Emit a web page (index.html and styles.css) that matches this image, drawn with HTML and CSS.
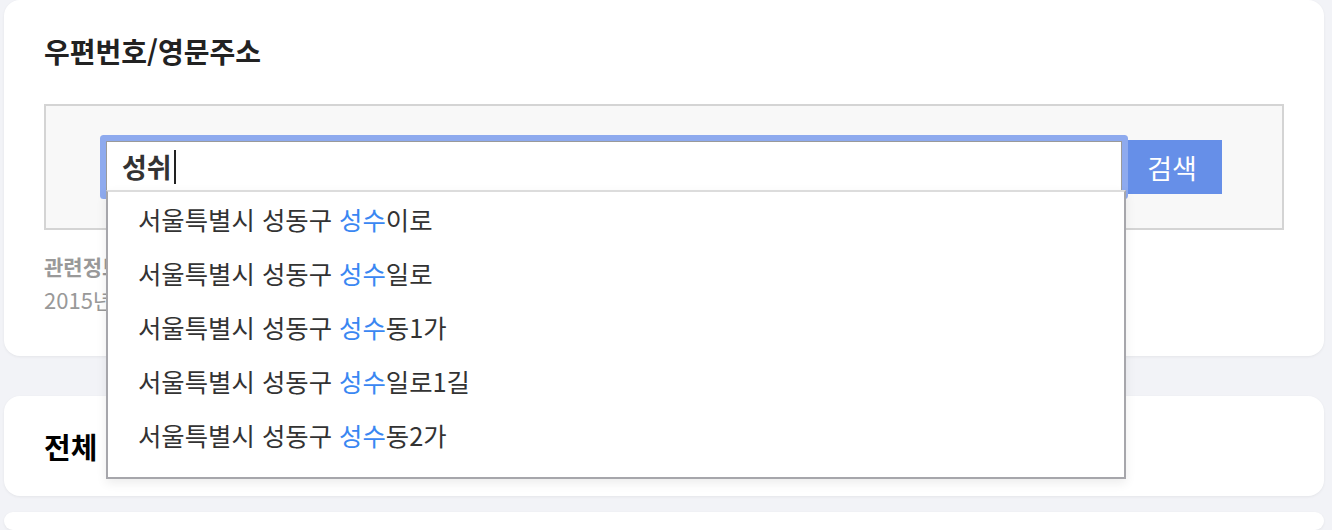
FILE: index.html
```html
<!DOCTYPE html>
<html lang="ko">
<head>
<meta charset="utf-8">
<title>우편번호/영문주소</title>
<link rel="stylesheet" href="styles.css">
</head>
<body>
<div class="page">
  <section class="card card-search">
    <h2 class="card-title">우편번호/영문주소</h2>
    <div class="search-box">
      <div class="search-row">
        <div class="input-wrap">
          <div class="input">성쉬<span class="caret"></span></div>
          <ul class="suggest">
            <li>서울특별시 성동구 <em>성수</em>이로</li>
            <li>서울특별시 성동구 <em>성수</em>일로</li>
            <li>서울특별시 성동구 <em>성수</em>동1가</li>
            <li>서울특별시 성동구 <em>성수</em>일로1길</li>
            <li>서울특별시 성동구 <em>성수</em>동2가</li>
          </ul>
        </div>
        <button class="btn-search">검색</button>
      </div>
    </div>
    <p class="info-title">관련정보</p>
    <p class="info-text">2015년 8월 1일부터 새 우편번호가 시행됩니다.</p>
  </section>
  <section class="card card-all">
    <h3 class="all-title">전체</h3>
  </section>
  <section class="card card-next"></section>
</div>
</body>
</html>
```

FILE: styles.css
```css
* { box-sizing: border-box; }
html, body { margin: 0; padding: 0; }
body {
  background: #f2f3f7;
  font-family: "Noto Sans CJK KR", "Noto Sans", sans-serif;
  color: #222;
  overflow: hidden;
  height: 530px;
}
.page {
  width: 1320px;
  margin-left: 4px;
}
.card {
  background: #fff;
  border-radius: 16px;
  box-shadow: 0 1px 3px rgba(0, 0, 0, 0.06);
}
.card-search {
  height: 356px;
  padding: 31px 40px 0 40px;
}
.card-title {
  margin: 0;
  font-size: 28px;
  line-height: 40px;
  font-weight: 700;
  color: #222;
}
.search-box {
  margin-top: 33px;
  height: 126px;
  border: 2px solid #d4d4d4;
  background: #f8f8f8;
  padding: 0 60px;
  display: flex;
  align-items: center;
}
.search-row {
  display: flex;
  align-items: center;
  width: 100%;
}
.input-wrap {
  position: relative;
  flex: 1;
}
.input {
  height: 52px;
  border: 1px solid #9a9a9a;
  border-bottom-color: #ddd;
  background: #fff;
  border-radius: 1px;
  box-shadow: 0 0 0 6px #8eaaee;
  padding-left: 15px;
  font-size: 27px;
  font-weight: 700;
  line-height: 50px;
  color: #333;
  display: flex;
  align-items: center;
}
.caret {
  display: inline-block;
  width: 2px;
  height: 34px;
  margin-left: 2px;
  background: #222;
}
.btn-search {
  width: 100px;
  height: 54px;
  border: 0;
  background: #668fe8;
  color: #fff;
  font-family: inherit;
  font-size: 27px;
  font-weight: 400;
  padding: 0;
}
.suggest {
  position: absolute;
  z-index: 5;
  left: 0;
  top: 49px;
  width: 1020px;
  margin: 0;
  padding: 0 0 15px 0;
  list-style: none;
  background: #fff;
  border: 2px solid #a6a6ab;
  border-top-color: #dcdcdc;
  box-shadow: 0 4px 10px rgba(0, 0, 0, 0.08);
}
.suggest li {
  height: 54px;
  line-height: 54px;
  padding-left: 30px;
  font-size: 25.4px;
  color: #333;
}
.suggest em {
  font-style: normal;
  color: #3a87f2;
}
.info-title {
  margin: 21px 0 0 0;
  font-size: 21px;
  font-weight: 700;
  line-height: 30px;
  color: #999;
}
.info-text {
  margin: 2px 0 0 0;
  font-size: 22px;
  line-height: 32px;
  color: #999;
}
.card-all {
  margin-top: 40px;
  height: 100px;
  padding: 0 40px;
  display: flex;
  align-items: center;
}
.all-title {
  margin: 0;
  font-size: 29px;
  font-weight: 700;
  color: #000;
}
.card-next {
  margin-top: 16px;
  height: 18px;
}
```
